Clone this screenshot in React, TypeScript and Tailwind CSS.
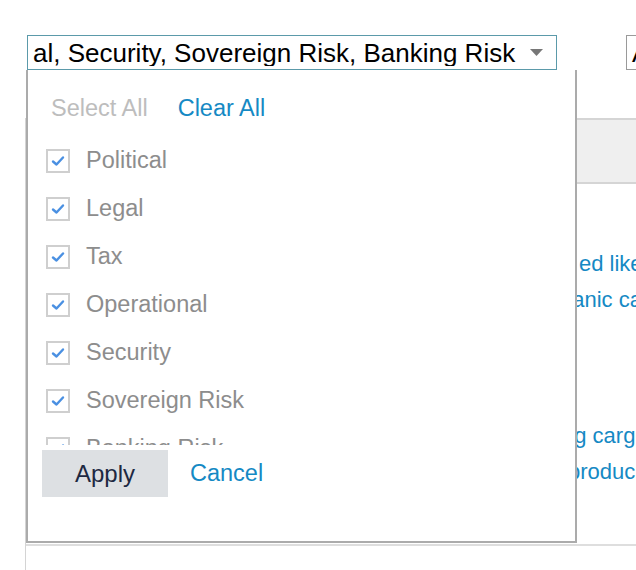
const items = [
  "Political",
  "Legal",
  "Tax",
  "Operational",
  "Security",
  "Sovereign Risk",
  "Banking Risk",
];

function Check() {
  return (
    <span className="flex h-[24px] w-[24px] shrink-0 items-center justify-center border-2 border-[#cfcfcf] bg-white">
      <svg width="14" height="12" viewBox="0 0 14 12">
        <path
          d="M2 6.5 L5.5 9.5 L12 2.5"
          fill="none"
          stroke="#4a90e2"
          strokeWidth="2.4"
          strokeLinecap="round"
          strokeLinejoin="round"
        />
      </svg>
    </span>
  );
}

export default function App() {
  return (
    <div className="relative h-[570px] w-[636px] overflow-hidden bg-white font-['Liberation_Sans',Arial,sans-serif]">
      {/* Top filters */}
      <div className="flex gap-[69px] pl-[27px] pt-[35px]">
        <div className="flex h-[35px] w-[530px] shrink-0 items-center border border-[#5b9aaa] pl-[5px] pr-[13px]">
          <span className="flex-1 overflow-hidden whitespace-nowrap text-[26px] leading-none text-black">
            al, Security, Sovereign Risk, Banking Risk
          </span>
          <svg width="13" height="7" viewBox="0 0 13 7">
            <path d="M0 0 H13 L6.5 7 Z" fill="#777" />
          </svg>
        </div>
        <div className="flex h-[35px] w-[100px] shrink-0 items-center border border-[#9a9a9a] pl-[5px]">
          <span className="text-[26px] leading-none text-black">A</span>
        </div>
      </div>

      {/* Page panel behind the menu */}
      <div className="ml-[25px] mt-[48px] h-[452px] border-l border-[#d4d4d4]">
        <div className="h-[66px] border-y-2 border-[#d5d5d5] bg-[#efefef]" />
        <div className="pt-[62px] text-[22px] leading-[36px] text-[#1589c4]">
          <div className="whitespace-nowrap pl-[553px]">ed like</div>
          <div className="whitespace-nowrap pl-[534px]">ganic cargo</div>
        </div>
        <div className="pt-[100px] text-[22px] leading-[36px] text-[#1589c4]">
          <div className="whitespace-nowrap pl-[536px]">ng cargo</div>
          <div className="whitespace-nowrap pl-[542px]">produc</div>
        </div>
        <div className="mt-[54px] border-b-2 border-[#dedede]" />
      </div>

      {/* Multi-select menu */}
      <div className="absolute left-[26px] top-[70px] flex h-[473px] w-[551px] flex-col border-2 border-t-0 border-[#ababab] bg-white">
        <div className="flex gap-[30px] pl-[23px] pt-[24px] text-[23.5px] leading-[28px]">
          <span className="text-[#bdbdbd]">Select All</span>
          <span className="text-[#1589c4]">Clear All</span>
        </div>
        <div className="mt-[15px] h-[308px] overflow-hidden">
          {items.map((item) => (
            <div key={item} className="flex h-[48px] items-center gap-[16px] pl-[18px]">
              <Check />
              <span className="text-[23.5px] text-[#8d8d8d]">{item}</span>
            </div>
          ))}
        </div>
        <div className="ml-[14px] mt-[5px] flex items-center gap-[22px]">
          <button className="h-[47px] w-[126px] bg-[#dde0e3] text-[24px] text-[#1d2942]">
            Apply
          </button>
          <span className="text-[23.5px] text-[#1589c4]">Cancel</span>
        </div>
      </div>
    </div>
  );
}
